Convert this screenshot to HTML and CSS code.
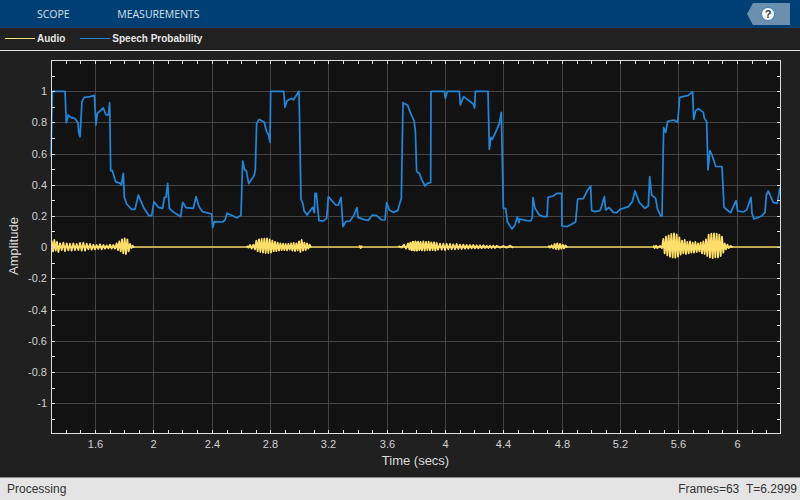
FILE: index.html
```html
<!DOCTYPE html>
<html lang="en">
<head>
<meta charset="utf-8">
<title>Scope</title>
<link rel="stylesheet" href="styles.css">
</head>
<body>
<div class="app">
  <header class="toolbar">
    <nav class="tabs">
      <span class="tab">SCOPE</span>
      <span class="tab">MEASUREMENTS</span>
    </nav>
    <div class="help">
      <span class="help-icon">?</span>
    </div>
  </header>
  <div class="legend">
    <span class="legend-item"><i class="swatch swatch-audio"></i>Audio</span>
    <span class="legend-item"><i class="swatch swatch-speech"></i>Speech Probability</span>
  </div>
  <svg class="chart" viewBox="0 51 800 426" width="800" height="426" aria-label="Amplitude over time">
    <rect class="plot-bg" x="51" y="60" width="730" height="374"/>
    <path class="grid" d="M95.5 60V434M153.5 60V434M212.5 60V434M270.5 60V434M328.5 60V434M387.5 60V434M445.5 60V434M503.5 60V434M562.5 60V434M620.5 60V434M678.5 60V434M737.5 60V434
      M51 91.5H781M51 122.5H781M51 154.5H781M51 185.5H781M51 216.5H781M51 247.5H781M51 278.5H781M51 310.5H781M51 341.5H781M51 372.5H781M51 403.5H781"/>

    <g class="speech">
      <polyline transform="translate(50 80) scale(.33333)" points="3,230 7,34 45,34 49,128 55,105 62,112 75,116 84,128 86,157 90,170 96,65 103,52 120,50 133,46 138,135 142,100 160,84 168,105 175,105 179,68 182,272 187,272 197,305 210,310 214,315 220,280 223,352 230,372 245,388 255,388 265,345 272,362 282,385 297,407 305,407 312,365 325,382 338,385 343,352 348,352 353,310 358,385 370,396 392,410 398,367 408,383 430,385 438,350 447,380 458,395 485,402 488,443 493,425 518,426 525,420 531,400 550,408 560,414"/>
      <polyline transform="translate(230 80) scale(.33333)" points="20,414 33,406 38,243 44,270 49,272 56,311 67,295 73,285 76,268 80,130 87,118 103,127 110,155 116,165 120,187 122,34 161,34 165,82 171,62 185,55 190,60 207,34 213,358 219,372 222,392 231,405 248,382 253,398 255,340 259,340 267,422 280,423 290,415 295,350 317,375 325,375 333,352 339,440 347,425 360,423 372,405 381,383 384,412 400,418 415,421 427,405 440,407 455,420 465,420 470,368 478,390 490,397 503,392 510,368 514,355 519,68 533,76 542,100 552,122 556,150 560,275"/>
      <polyline transform="translate(410 80) scale(.33333)" points="20,275 28,280 35,298 45,318 52,310 62,308 63,34 103,34 106,55 112,34 148,34 151,75 161,50 190,72 194,84 196,34 234,34 238,208 243,172 247,178 262,145 268,130 274,97 280,385 287,385 292,425 306,447 315,435 322,410 327,428 329,417 350,422 362,423 367,412 369,353 375,385 388,405 400,410 411,410 414,352 430,348 440,340 455,340 456,438 470,440 485,433 497,425 503,357 520,356 533,330 542,318 545,392 555,395 570,392"/>
      <polyline transform="translate(600 80) scale(.33333)" points="0,392 5,378 13,350 17,390 27,382 40,397 50,398 60,388 85,380 97,365 105,333 118,368 135,385 145,378 149,290 155,345 167,355 172,385 182,408 186,408 191,143 197,157 203,124 222,120 233,127 239,52 265,46 278,35 281,118 287,92 295,86 310,97 313,115 320,125 324,270 330,212 337,228 347,259 366,260 372,382 385,393 392,398 408,362 413,393 430,396 440,390 453,352 456,400 462,417 485,408 495,397 499,345 505,333 520,368 532,370 540,322"/>
    </g>

    <g class="audio">
      <line class="audio-base" x1="51" y1="247" x2="781" y2="247"/>
      <path transform="translate(50 80) scale(.33333)" d="M5 482 9 514 13 480 17 512 21 486 25 516 30 490 35 510 40 488 45 513 50 490 55 511 60 491 65 512 70 490 75 510 80 492 85 510 90 489 95 512 100 488 105 512 110 491 115 508 120 492 125 509 130 494 135 508 140 495 145 507 150 493 155 508 160 495 165 506 170 496 175 505 180 494 185 506 190 495 195 506 200 490 204 510 208 484 212 514 216 478 220 520 224 475 228 522 232 478 236 514 240 492 244 504 248 497 252 503"/>
      <path transform="translate(230 80) scale(.33333)" d="M50 498 55 503 60 495 65 506 70 494 75 508 79 482 83 514 87 478 91 516 95 477 99 518 103 476 107 519 111 475 115 519 119 478 123 518 127 482 131 514 135 486 139 513 143 488 147 512 151 490 155 510 159 491 163 510 167 492 171 511 175 492 179 509 183 490 187 512 191 489 195 513 199 490 203 511 207 484 211 516 215 480 219 512 223 488 227 510 231 490 235 506 239 494 243 503"/>
      <path transform="translate(230 80) scale(.33333)" d="M388 496 392 504 396 497"/>
      <path transform="translate(230 80) scale(.33333)" d="M505 498 515 503 522 494 528 506 534 490 538 508 542 488 546 510 550 486 554 512 558 487 562 511 566 487 570 510"/>
      <path transform="translate(410 80) scale(.33333)" d="M0 488 4 510 8 486 12 511 16 484 20 512 24 485 28 510 32 486 36 511 40 484 44 512 48 486 52 510 56 485 60 511 64 487 68 510 72 487 76 512 80 489 84 509 90 491 95 509 100 491 105 510 110 492 115 508 120 492 125 508 130 493 135 508 140 492 145 507 150 494 155 507 160 494 165 506 170 495 175 506 180 495 185 505 190 495 195 505 200 496 205 505 210 496 215 505 220 496 225 504 230 497 235 504 240 497 245 504 250 497 255 504 260 497 270 503 280 498 290 503 300 497 310 503"/>
      <path transform="translate(410 80) scale(.33333)" d="M415 497 420 503 425 496 430 505 434 492 438 507 442 490 446 508 450 492 454 506 458 494 462 505 466 496 472 503"/>
      <path transform="translate(600 80) scale(.33333)" d="M160 496 164 504 168 497 172 504 180 498 186 504 190 477 194 520 198 470 202 526 206 466 210 530 214 462 218 532 222 460 226 533 230 463 234 530 238 472 242 524 246 482 250 520 254 480 258 522 262 486 266 520 270 484 274 518 278 488 282 518 286 486 290 516 294 490 298 514 302 488 306 520 310 484 314 522 318 478 322 528 326 464 330 532 334 461 338 534 342 460 346 532 350 461 354 532 358 464 362 528 366 470 370 518 374 490 378 508 382 494 386 504 392 498 398 503"/>
    </g>

    <rect class="frame" x="51.5" y="60.5" width="729" height="373"/>
    <path class="ticks" d="M66.5 61v3M80.5 61v3M95.5 61v3M110.5 61v3M124.5 61v3M139.5 61v3M153.5 61v3M168.5 61v3M182.5 61v3M197.5 61v3M212.5 61v3M227.5 61v3M241.5 61v3M256.5 61v3M270.5 61v3M285.5 61v3M299.5 61v3M314.5 61v3M328.5 61v3M343.5 61v3M358.5 61v3M372.5 61v3M387.5 61v3M402.5 61v3M416.5 61v3M431.5 61v3M445.5 61v3M460.5 61v3M474.5 61v3M489.5 61v3M503.5 61v3M518.5 61v3M533.5 61v3M547.5 61v3M562.5 61v3M577.5 61v3M591.5 61v3M606.5 61v3M620.5 61v3M635.5 61v3M649.5 61v3M664.5 61v3M678.5 61v3M693.5 61v3M708.5 61v3M722.5 61v3M737.5 61v3M752.5 61v3M766.5 61v3
      M66.5 430v3M80.5 430v3M95.5 430v3M110.5 430v3M124.5 430v3M139.5 430v3M153.5 430v3M168.5 430v3M182.5 430v3M197.5 430v3M212.5 430v3M227.5 430v3M241.5 430v3M256.5 430v3M270.5 430v3M285.5 430v3M299.5 430v3M314.5 430v3M328.5 430v3M343.5 430v3M358.5 430v3M372.5 430v3M387.5 430v3M402.5 430v3M416.5 430v3M431.5 430v3M445.5 430v3M460.5 430v3M474.5 430v3M489.5 430v3M503.5 430v3M518.5 430v3M533.5 430v3M547.5 430v3M562.5 430v3M577.5 430v3M591.5 430v3M606.5 430v3M620.5 430v3M635.5 430v3M649.5 430v3M664.5 430v3M678.5 430v3M693.5 430v3M708.5 430v3M722.5 430v3M737.5 430v3M752.5 430v3M766.5 430v3
      M52 76.5h3M52 91.5h3M52 107.5h3M52 122.5h3M52 138.5h3M52 154.5h3M52 169.5h3M52 185.5h3M52 200.5h3M52 216.5h3M52 231.5h3M52 247.5h3M52 263.5h3M52 278.5h3M52 294.5h3M52 310.5h3M52 325.5h3M52 341.5h3M52 356.5h3M52 372.5h3M52 388.5h3M52 403.5h3M52 419.5h3
      M777 76.5h3M777 91.5h3M777 107.5h3M777 122.5h3M777 138.5h3M777 154.5h3M777 169.5h3M777 185.5h3M777 200.5h3M777 216.5h3M777 231.5h3M777 247.5h3M777 263.5h3M777 278.5h3M777 294.5h3M777 310.5h3M777 325.5h3M777 341.5h3M777 356.5h3M777 372.5h3M777 388.5h3M777 403.5h3M777 419.5h3"/>

    <g class="ylabels">
      <text x="47" y="95">1</text>
      <text x="47" y="126">0.8</text>
      <text x="47" y="158">0.6</text>
      <text x="47" y="189">0.4</text>
      <text x="47" y="220">0.2</text>
      <text x="47" y="251">0</text>
      <text x="47" y="282">-0.2</text>
      <text x="47" y="314">-0.4</text>
      <text x="47" y="345">-0.6</text>
      <text x="47" y="376">-0.8</text>
      <text x="47" y="407">-1</text>
    </g>
    <g class="xlabels">
      <text x="95.5" y="448">1.6</text>
      <text x="153.5" y="448">2</text>
      <text x="212.5" y="448">2.4</text>
      <text x="270.5" y="448">2.8</text>
      <text x="328.5" y="448">3.2</text>
      <text x="387.5" y="448">3.6</text>
      <text x="445.5" y="448">4</text>
      <text x="503.5" y="448">4.4</text>
      <text x="562.5" y="448">4.8</text>
      <text x="620.5" y="448">5.2</text>
      <text x="678.5" y="448">5.6</text>
      <text x="737.5" y="448">6</text>
    </g>
    <text class="xtitle" x="415.5" y="465">Time (secs)</text>
    <text class="ytitle" transform="translate(18 246) rotate(-90)">Amplitude</text>
  </svg>
  <footer class="status">
    <span>Processing</span>
    <span class="status-right">Frames=63&nbsp;&nbsp;T=6.2999</span>
  </footer>
</div>
</body>
</html>
```

FILE: styles.css
```css
* { box-sizing: border-box; }
html, body { margin: 0; padding: 0; }
body { width: 800px; height: 500px; overflow: hidden; background: #202020; font-family: "Liberation Sans", Arial, sans-serif; }
.app { display: flex; flex-direction: column; width: 800px; height: 500px; }

.toolbar { flex: 0 0 28px; display: flex; align-items: flex-start; justify-content: space-between; background: #003f74; padding: 3px 10px 0 37px; }
.tabs { display: flex; gap: 47.5px; height: 22px; align-items: center; font-family: "Open Sans", sans-serif; font-size: 10.5px; color: #d5e0ea; }
.help { width: 43px; height: 22px; display: flex; align-items: center; justify-content: center; padding-right: 1px; background: #6c8fae; clip-path: polygon(0 50%, 6px 0, 100% 0, 100% 100%, 6px 100%); }
.help-icon { width: 14px; height: 14px; border-radius: 50%; background: #fff; border: 1px solid #2f80d0; color: #333; font: bold 11px/12px "Liberation Sans", sans-serif; text-align: center; }

.legend { flex: 0 0 23px; display: flex; align-items: center; gap: 15px; padding: 0 0 1px 5px; background: #212121; border-bottom: 1px solid #e0e0e0; font-size: 10px; font-weight: bold; color: #e6e6e6; }
.legend-item { display: flex; align-items: center; gap: 2px; }
.swatch { display: block; width: 30px; height: 1px; }
.swatch-audio { background: #ffe070; }
.swatch-speech { background: #2a85d5; }

.chart { flex: 0 0 426px; display: block; background: #202020; }
.plot-bg { fill: #121212; }
.grid { fill: none; stroke: #444; stroke-width: 1; }
.frame { fill: none; stroke: #dcdcdc; stroke-width: 1; }
.ticks { fill: none; stroke: #dcdcdc; stroke-width: 1; }
.speech polyline { fill: none; stroke: #2385d8; stroke-width: 5.2; stroke-linejoin: round; }
.audio path { fill: none; stroke: #ffdf6a; stroke-width: 5.5; stroke-linejoin: round; }
.audio-base { stroke: #eccf5c; stroke-width: 1.6; }

.ylabels text { font-size: 11px; fill: #d0d0d0; text-anchor: end; }
.xlabels text { font-size: 11px; fill: #d0d0d0; text-anchor: middle; }
.xtitle, .ytitle { font-size: 13px; fill: #dcdcdc; text-anchor: middle; }

.status { flex: 0 0 23px; display: flex; align-items: center; justify-content: space-between; padding: 0 3px 0 7px; background: #e4e4e4; border-top: 1px solid #8a8a8a; font-size: 12px; color: #333; }
```
